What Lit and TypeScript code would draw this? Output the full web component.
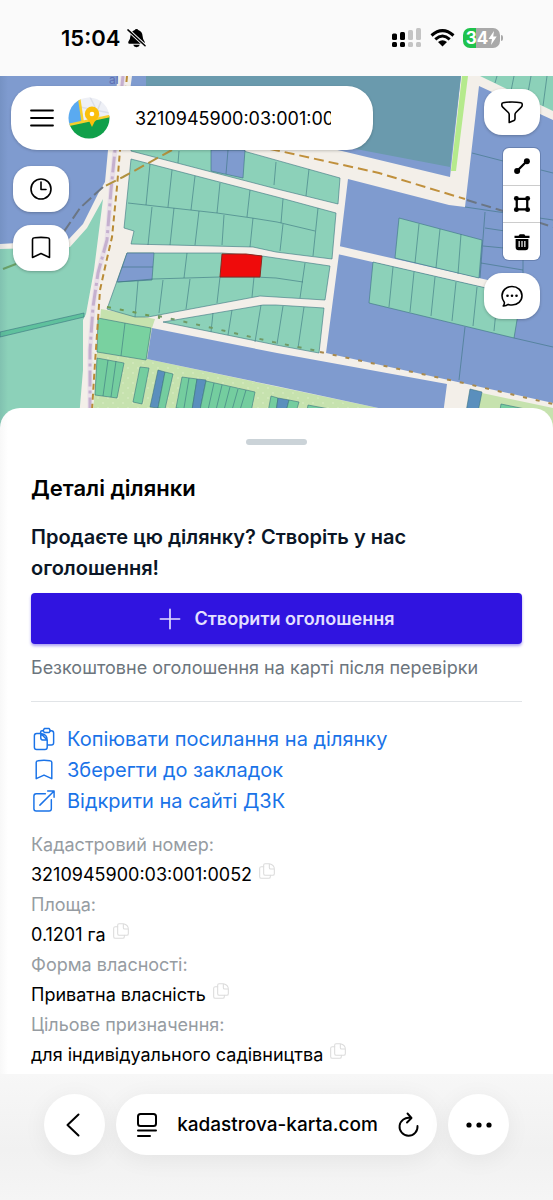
import { LitElement, html, svg, css } from "lit";
import { customElement, property } from "lit/decorators.js";

const GREEN = "#8cd1b9";
const BLUE = "#7f9bcf";

interface Shape {
  points: string;
  fill: string;
}

const areas: Shape[] = [
  { points: "0,76 118,76 108,150 105,182 99,192 83,224 68,240 0,244", fill: BLUE },
  { points: "0,249 70,247 87,228 103,199 94,270 86,314 83,320 83,370 78,430 0,430", fill: GREEN },
  { points: "132,76 461,76 450,177 342,151 128,105", fill: BLUE },
  { points: "146,76 461,76 450,167 340,146 146,105", fill: "#6a9aad" },
  { points: "462,76 468,76 456,171 451,171", fill: "#b5ea8c" },
  { points: "480,76 553,76 553,111", fill: GREEN },
  { points: "348,179 449,205 465,207 479,86 553,120 553,403 326,353 339,254", fill: BLUE },
  { points: "101,309 155,319 152,328 147,359 383,409 443,422 443,430 92,430 97,352", fill: "#c6e2ae" },
  { points: "482,393 553,408 553,430 466,430", fill: "#c6e2ae" },
  { points: "152,328 277,353 447,384 442,422 383,409 276,386 147,359", fill: BLUE },
];

const parcels: Shape[] = [
  { points: "0,332 84,313 84,317 0,337", fill: "#5fc19d" },
  { points: "131,145 215,143 340,178 338,204 277,189 131,151", fill: GREEN },
  { points: "211,150 245,150 243,178 211,171", fill: BLUE },
  { points: "131,159 277,197 336,213 332,259 276,252 253,247 131,244 134,231 124,228", fill: GREEN },
  { points: "127,253 222,253 262,256 330,266 325,300 276,297 260,296 148,317 135,317 107,309", fill: GREEN },
  { points: "127,253 154,253 152,280 117,282", fill: BLUE },
  { points: "163,322 263,305 276,305 324,308 319,353 276,345", fill: GREEN },
  { points: "399,218 482,240 479,278 395,258", fill: GREEN },
  { points: "373,262 521,296 514,338 369,303", fill: GREEN },
  { points: "98,318 151,328 146,360 97,352", fill: "#79d1a0" },
  { points: "97,358 124,363 117,398 95,395", fill: "#74cd9f" },
  { points: "140,367 149,368 142,404 133,402", fill: "#74cd9f" },
  { points: "158,370 165,372 158,408 150,407", fill: "#5a8fbd" },
  { points: "165,372 173,374 165,409 158,408", fill: "#74cd9f" },
  { points: "182,377 197,379 192,410 176,408", fill: "#74cd9f" },
  { points: "197,379 206,380 200,410 192,410", fill: "#5a8fbd" },
  { points: "206,381 255,392 251,412 200,410", fill: "#74cd9f" },
  { points: "271,396 278,398 276,412 268,412", fill: "#74cd9f" },
  { points: "278,398 289,400 286,412 276,412", fill: "#5a8fbd" },
  { points: "289,400 299,402 296,412 286,412", fill: "#74cd9f" },
  { points: "308,405 340,411 340,416 306,416", fill: "#74cd9f" },
  { points: "470,389 482,392 478,412 466,412", fill: "#5a8fbd" },
  { points: "501,404 530,410 530,416 499,416", fill: "#74cd9f" },
];

const boundaries =
  "M228,150L226,174M179,151L178,163M309,169L306,196M276,162L274,185" +
  "M128,203L217,213L252,218L277,222L315,231" +
  "M150,164L146,205M172,170L168,207M195,176L191,210M220,183L217,213M250,190L247,217M283,199L281,223M318,208L313,256" +
  "M152,207L148,245M174,208L170,245M199,211L195,245M224,215L222,245M253,218L250,247M283,224L280,251" +
  "M122,267H153M118,282L153,279L220,277L255,277L276,278L303,282M187,253L184,278M305,263L300,298" +
  "M138,281L135,317M163,280L159,313M190,279L186,309M220,277L217,303M254,277L252,297" +
  "M213,313L211,332M232,310L228,335M261,305L255,342M283,306L277,344M304,307L298,348" +
  "M419,224L415,263M440,229L436,268M461,234L458,274" +
  "M393,267L389,307M414,272L410,312M435,277L431,316M456,282L452,321M477,287L473,326M498,291L494,331" +
  "M465,327L459,380M514,338L553,347M485,212L480,278M485,228L505,231M483,246L504,248M481,263L523,270M523,260V273" +
  "M472,153L503,161M541,170L553,173M465,207L553,220" +
  "M497,76L495,83M514,76L511,91M531,76L527,98M547,76L543,106" +
  "M125,323L121,356M108,360L103,396M116,361L111,397" +
  "M189,378L184,408M214,383L208,410M222,385L216,410M230,387L224,410M238,389L232,410M246,390L240,410";

@customElement("parcel-map")
class ParcelMap extends LitElement {
  static styles = css`
    :host {
      display: block;
    }
    svg {
      display: block;
      width: 100%;
      height: 100%;
    }
    .parcel,
    .boundary {
      stroke: #3a7480;
      stroke-width: 0.6;
    }
    .line {
      fill: none;
    }
    .street {
      fill: #5f6fb4;
      font-size: 12px;
    }
  `;

  render() {
    return html`
      <svg viewBox="0 76 553 354" preserveAspectRatio="xMidYMin slice" role="img" aria-label="Кадастрова карта">
        <defs>
          <pattern id="orchard" width="10" height="10" patternUnits="userSpaceOnUse">
            <circle cx="3" cy="3" r="0.8" fill="#dcedc9"></circle>
            <circle cx="8" cy="8" r="0.8" fill="#dcedc9"></circle>
          </pattern>
          <linearGradient id="edge">
            <stop offset="0" stop-color="#305070" stop-opacity="0.12"></stop>
            <stop offset="1" stop-color="#305070" stop-opacity="0"></stop>
          </linearGradient>
        </defs>
        <rect y="76" width="553" height="354" fill="#f3efe9"></rect>
        ${areas.map((a) => svg`<polygon points=${a.points} fill=${a.fill}></polygon>`)}
        <polygon points="92,352 147,361 383,411 443,424 92,430" fill="url(#orchard)"></polygon>
        <path class="line" d="M338,250L500,287" stroke="#f3efe9" stroke-width="8"></path>
        ${parcels.map((p) => svg`<polygon class="parcel" points=${p.points} fill=${p.fill}></polygon>`)}
        <path class="line boundary" d=${boundaries}></path>
        <polygon points="222,254 246,254 262,256 260,277 220,277" fill="#ef0b0b" stroke="#8a2a20"></polygon>
        <text class="street" x="109" y="84">al</text>
        <path class="line" d="M123,76L115,150L111,190L107,240L98,273L93,307L90,350L90,410" stroke="#e9dfe8" stroke-width="5"></path>
        <path class="line" d="M123,76L115,150L111,190L107,240L98,273L93,307L90,350L90,410" stroke="#c5b0cf" stroke-width="3" stroke-dasharray="16 4 3 4"></path>
        <path class="line" d="M127,76L120,150L117,187L112,237L106,263L100,290L98,320L95,363L92,410" stroke="#b98b35" stroke-width="2" stroke-dasharray="6 4"></path>
        <path class="line" d="M172,150L123,177L103,187" stroke="#b0913f" stroke-width="2" stroke-dasharray="11 5"></path>
        <path class="line" d="M103,187L80,208L63,233" stroke="#6b7684" stroke-width="2" stroke-dasharray="12 4"></path>
        <path class="line" d="M3,269L16,264" stroke="#6aa066" stroke-width="2"></path>
        <path class="line" d="M270,149L284,152L379,173L465,199" stroke="#c0903c" stroke-width="2" stroke-dasharray="10 5"></path>
        <path class="line" d="M467,200L503,211L553,227" stroke="#6b7684" stroke-width="2" stroke-dasharray="10 5"></path>
        <path class="line" d="M107,307L133,312L160,318" stroke="#6f9a55" stroke-width="2" stroke-dasharray="4 9"></path>
        <path class="line" d="M158,316L172,319L208,327L273,342L318,351" stroke="#6f9a66" stroke-width="2" stroke-dasharray="4 9"></path>
        <path class="line" d="M320,352L459,382L553,404" stroke="#a98a4c" stroke-width="2" stroke-dasharray="4 9"></path>
        <rect y="76" width="8" height="354" fill="url(#edge)"></rect>
      </svg>
    `;
  }
}

const stroke24 = (d: string) => svg`<path d=${d} fill="none" stroke="currentColor" stroke-width="1.6" stroke-linecap="round" stroke-linejoin="round"></path>`;

const glyphs: Record<string, unknown> = {
  menu: svg`<path d="M1,4.500H23M1,12H23M1,19.500H23" stroke="currentColor" stroke-width="1.800" stroke-linecap="round"></path>`,
  clock: svg`${stroke24("M22,12A10,10 0 1 1 2,12A10,10 0 0 1 22,12Z")}${stroke24("M12,5V12.500H17")}`,
  bookmark: stroke24("M3.500,3.500Q3.500,2 5.500,1.800Q12,1 18.500,1.800Q20.500,2 20.500,3.500V21.500L12,17.500L3.500,21.500Z"),
  filter: stroke24("M12,2C15.500,2 18.500,2.300 21,2.800Q22.200,3 22.200,4.200V5Q22.200,6.200 21.300,7.100L15.900,12.500Q15,13.400 15,14.600V18.800Q15,20 14,20.600L9.200,22.500V14.600Q9.200,13.400 8.300,12.500L2.700,7.100Q1.800,6.200 1.800,5V4.200Q1.800,3 3,2.800C5.500,2.300 8.500,2 12,2Z"),
  chat: svg`${stroke24("M12,2.500C17.600,2.500 22,6.600 22,11.800S17.600,21 12,21Q10,21 8.200,20.400Q6,22.200 3.200,22Q4.700,20.200 4.300,18.200Q2,15.500 2,11.800C2,6.600 6.400,2.500 12,2.500Z")}
    <circle cx="7.500" cy="11.800" r="1.300"></circle><circle cx="12" cy="11.800" r="1.300"></circle><circle cx="16.500" cy="11.800" r="1.300"></circle>`,
  line: svg`<path d="M6,18L18,6" stroke="currentColor" stroke-width="3"></path><circle cx="5.500" cy="18.500" r="4"></circle><circle cx="18.500" cy="5.500" r="4"></circle>`,
  polygon: svg`<path d="M5,5H19V19H5Z" fill="none" stroke="currentColor" stroke-width="3"></path>
    <circle cx="4.500" cy="4.500" r="3.300"></circle><circle cx="19.500" cy="4.500" r="3.300"></circle><circle cx="4.500" cy="19.500" r="3.300"></circle><circle cx="19.500" cy="19.500" r="3.300"></circle>`,
  trash: svg`<path fill-rule="evenodd" d="M9,1.500H15L16.500,3.500H22V6.500H2V3.500H7.500ZM3.500,8H20.500V19Q20.500,23 16.500,23H7.500Q3.500,23 3.500,19ZM7.400,10.500V18.500H9V10.500ZM11.200,10.500V18.500H12.800V10.500ZM15,10.500V18.500H16.600V10.500Z"></path>`,
  plus: svg`<path d="M12,1.500V22.500M1.500,12H22.500" stroke="currentColor" stroke-width="1.800" stroke-linecap="round"></path>`,
  clipboard: svg`${stroke24("M8.300,6V4.500Q8.300,3 9.800,3H11M18.500,3H20Q22.500,3 22.500,5.500V16Q22.500,18.500 20,18.500H16")}
    ${stroke24("M12.500,0.500H17.500L19,3L17.500,5H12.500L11,3Z")}
    ${stroke24("M8.500,6H4Q1.500,6 1.500,8.500V21Q1.500,23.500 4,23.500H13Q15.500,23.500 15.500,21V13ZM8.500,6V11Q8.500,13 10.500,13H15.500M8.500,6Q15.500,7 15.500,13")}`,
  external: svg`${stroke24("M13.500,4H3.500Q1,4 1,6.500V20.500Q1,23 3.500,23H17.500Q20,23 20,20.500V10.500")}${stroke24("M7.500,16.500L23,1M16,1H23V8")}`,
  copy: svg`${stroke24("M9,1H15.500Q23,2.500 23,9V16Q23,18.500 20.500,18.500H9.500Q7,18.500 7,16V3.500Q7,1 9,1ZM15.500,1V7Q15.500,9 17.500,9H23")}
    ${stroke24("M7,5.500H3.500Q1,5.500 1,8V20.500Q1,23 3.500,23H14.500Q17,23 17,20.500V18.500")}`,
  back: svg`<path d="M15.500,1.500L4.500,12L15.500,22.500" fill="none" stroke="currentColor" stroke-width="2" stroke-linecap="round" stroke-linejoin="round"></path>`,
  page: svg`<rect x="3" y="1" width="18" height="12" rx="2.500" fill="none" stroke="currentColor" stroke-width="2"></rect><path d="M3,17.500H21M3,23H15" stroke="currentColor" stroke-width="2" stroke-linecap="round"></path>`,
  reload: svg`<path d="M14.500,5A9,9 0 1 0 21.500,13M11.500,0.500L15.500,5L11,9.500" fill="none" stroke="currentColor" stroke-width="1.900" stroke-linecap="round" stroke-linejoin="round"></path>`,
};

@customElement("line-icon")
class LineIcon extends LitElement {
  @property() name = "";

  static styles = css`
    :host {
      display: inline-block;
      flex: none;
      width: 24px;
      height: 24px;
    }
    svg {
      display: block;
      width: 100%;
      height: 100%;
      fill: currentColor;
      overflow: visible;
    }
  `;

  render() {
    return html`<svg viewBox="0 0 24 24" aria-hidden="true">${glyphs[this.name]}</svg>`;
  }
}

@customElement("phone-status")
class PhoneStatus extends LitElement {
  static styles = css`
    :host {
      display: flex;
      align-items: center;
      justify-content: space-between;
      height: 76px;
      padding: 0 50px 0 61px;
      box-sizing: border-box;
      background: #fafafa;
      color: #000;
    }
    .group {
      display: flex;
      align-items: center;
    }
    .time {
      font-size: 22px;
      font-weight: 600;
    }
    .bell {
      margin-left: 7px;
    }
    .wifi {
      margin: 0 8px 0 9px;
    }
    .battery {
      display: flex;
      align-items: center;
      justify-content: center;
      width: 37px;
      height: 20px;
      border-radius: 7px;
      background: linear-gradient(90deg, #1fc24d 34%, #a9a9a9 34%);
      color: #fff;
      font-size: 17px;
      font-weight: 700;
    }
    .cap {
      width: 2px;
      height: 6px;
      margin-left: 1px;
      border-radius: 0 2px 2px 0;
      background: #a9a9a9;
    }
  `;

  render() {
    return html`
      <div class="group">
        <span class="time">15:04</span>
        <svg class="bell" width="19" height="20" viewBox="0 0 20 20" aria-hidden="true">
          <path d="M10,0.500Q11.500,0.500 11.800,1.500Q16.200,3 16.400,8Q16.600,12 18.600,14Q19.300,16 17.500,16H2.500Q0.700,16 1.400,14Q3.400,12 3.600,8Q3.800,3 8.200,1.500Q8.500,0.500 10,0.500ZM6.500,17.200H13.500Q12.800,19.800 10,19.800T6.500,17.200Z"></path>
          <path d="M0,0.500L20,19" stroke="#fafafa" stroke-width="3.600"></path>
          <path d="M1,1.500L19,18.200" stroke="#000" stroke-width="1.600" stroke-linecap="round"></path>
        </svg>
      </div>
      <div class="group">
        <svg width="29" height="20" viewBox="0 0 29 20" aria-hidden="true">
          <rect x="0" y="5.500" width="5" height="6.500" rx="1.500"></rect>
          <rect x="8" y="4" width="5" height="8" rx="1.500"></rect>
          <rect x="16" y="2" width="5" height="10" rx="1.500" fill="#c4c4c4"></rect>
          <rect x="24" y="0" width="5" height="12" rx="1.500" fill="#c4c4c4"></rect>
          <rect x="0" y="14" width="5" height="5" rx="1.500"></rect>
          <rect x="8" y="14" width="5" height="5" rx="1.500"></rect>
          <rect x="16" y="14" width="5" height="5" rx="1.500" fill="#c4c4c4"></rect>
          <rect x="24" y="14" width="5" height="5" rx="1.500" fill="#c4c4c4"></rect>
        </svg>
        <svg class="wifi" width="25" height="18" viewBox="0 0 25 18" aria-hidden="true">
          <path d="M1.500,6.500Q12.500,-3.200 23.500,6.500M5.300,10.300Q12.500,3.800 19.700,10.300" fill="none" stroke="#000" stroke-width="3"></path>
          <path d="M8,13Q12.500,9.500 17,13L12.500,17.600Z"></path>
        </svg>
        <span class="battery">34<svg width="9" height="14" viewBox="0 0 9 14" fill="#fff" aria-hidden="true"><path d="M6,0L0.500,8H4L3,14L8.700,5.500H5.200Z"></path></svg></span>
        <span class="cap"></span>
      </div>
    `;
  }
}

interface Detail {
  label: string;
  value: string;
}

@customElement("app-root")
class AppRoot extends LitElement {
  @property({ attribute: false }) details: Detail[] = [
    { label: "Кадастровий номер:", value: "3210945900:03:001:0052" },
    { label: "Площа:", value: "0.1201 га" },
    { label: "Форма власності:", value: "Приватна власність" },
    { label: "Цільове призначення:", value: "для індивідуального садівництва" },
  ];

  static styles = css`
    :host {
      display: flex;
      flex-direction: column;
      min-height: 100vh;
      background: #fff;
      color: #000;
      font-family: Inter, "Noto Sans", sans-serif;
    }
    button,
    input {
      padding: 0;
      border: 0;
      background: none;
      color: inherit;
      font: inherit;
    }
    button {
      cursor: pointer;
    }
    .stage {
      position: relative;
      display: flex;
      justify-content: space-between;
      gap: 24px;
      height: 354px;
      box-sizing: border-box;
      padding: 10px 13px 0 11px;
    }
    .map {
      position: absolute;
      inset: 0;
    }
    .side {
      position: relative;
      display: flex;
      flex-direction: column;
      gap: 13px;
    }
    .left {
      flex: 1;
      max-width: 362px;
    }
    .right {
      align-items: flex-end;
      padding-top: 3px;
    }
    .search {
      display: flex;
      align-items: center;
      height: 64px;
      box-sizing: border-box;
      margin-bottom: 3px;
      padding: 0 42px 0 19px;
      border-radius: 26px;
      background: #fff;
      box-shadow: 0 1px 3px rgba(0, 0, 0, 0.2);
    }
    .burger {
      display: flex;
      margin-right: 14px;
    }
    .logo {
      flex: none;
      width: 42px;
      height: 42px;
      margin-right: 25px;
    }
    .query {
      flex: 1;
      min-width: 0;
      font-size: 18px;
      outline: none;
    }
    .chip {
      display: flex;
      align-items: center;
      justify-content: center;
      width: 56px;
      height: 46px;
      border-radius: 18px;
      background: #fff;
      box-shadow: 0 1px 3px rgba(0, 0, 0, 0.25);
    }
    .left .chip {
      margin-left: 2px;
    }
    .tools {
      display: flex;
      flex-direction: column;
      width: 37px;
      height: 112px;
      border-radius: 6px;
      background: #fff;
      box-shadow: 0 0 0 1px rgba(60, 80, 120, 0.35);
    }
    .tool {
      flex: 1;
      display: flex;
      align-items: center;
      justify-content: center;
    }
    .tool + .tool {
      border-top: 1px solid #ccc;
    }
    .tool line-icon {
      width: 18px;
      height: 18px;
    }
    .sheet {
      position: relative;
      flex: 1;
      margin-top: -22px;
      padding: 31px 31px 4px;
      border-radius: 20px 20px 0 0;
      background: linear-gradient(90deg, #f8f8f8, #fff 8px);
    }
    .handle {
      display: block;
      width: 61px;
      height: 6px;
      margin: 0 auto 28px;
      border-radius: 3px;
      background: #cbd3d8;
    }
    h1,
    h2,
    p,
    dl,
    dd {
      margin: 0;
    }
    h1 {
      font-size: 22px;
      font-weight: 600;
      line-height: 30px;
      margin-bottom: 19px;
    }
    h2 {
      color: #0b1626;
      font-size: 20px;
      font-weight: 600;
      line-height: 31px;
      margin-bottom: 9px;
    }
    .create {
      display: flex;
      align-items: center;
      justify-content: center;
      gap: 14px;
      width: 100%;
      height: 51px;
      border-radius: 4px;
      background: #3014e0;
      box-shadow: 0 2px 3px rgba(48, 20, 224, 0.4);
      color: #e4e0ff;
      font-size: 18px;
      font-weight: 600;
    }
    .note {
      margin-top: 9px;
      padding-bottom: 18px;
      border-bottom: 1px solid #e1e4e7;
      color: #6c757d;
      font-size: 18px;
      line-height: 30px;
    }
    .actions {
      display: flex;
      flex-direction: column;
      align-items: flex-start;
      margin: 21px 0 14px;
      padding-left: 2px;
    }
    .action {
      display: flex;
      align-items: center;
      gap: 12px;
      height: 31px;
      color: #1a73e8;
      font-size: 20px;
      text-decoration: none;
    }
    .create line-icon,
    .action line-icon {
      width: 22px;
      height: 22px;
    }
    .details {
      font-size: 18px;
      line-height: 30px;
    }
    dt {
      color: #969ca2;
    }
    dd {
      display: flex;
      gap: 7px;
    }
    .copy {
      display: flex;
      height: 22px;
      align-items: center;
      color: #dcdcdc;
    }
    .copy line-icon {
      width: 16px;
      height: 18px;
    }
    .browser {
      display: flex;
      gap: 11px;
      padding: 20px 44px 45px;
      background: linear-gradient(#f7f7f7, #f1f1f1 60%, #f5f5f5);
    }
    .round,
    .address {
      display: flex;
      align-items: center;
      height: 61px;
      border-radius: 31px;
      background: #fff;
      box-shadow: 0 4px 24px rgba(0, 0, 0, 0.06);
    }
    .round {
      flex: none;
      justify-content: center;
      width: 61px;
    }
    .address {
      flex: 1;
      justify-content: space-between;
      box-sizing: border-box;
      padding: 0 17px 0 19px;
      font-size: 19px;
      font-weight: 500;
    }
    .icon-button {
      display: flex;
    }
  `;

  render() {
    return html`
      <phone-status></phone-status>
      <section class="stage">
        <parcel-map class="map"></parcel-map>
        <div class="side left">
          <div class="search">
            <button class="burger" aria-label="Меню"><line-icon name="menu"></line-icon></button>
            <svg class="logo" viewBox="0 0 42 42" aria-hidden="true">
              <defs><clipPath id="disc"><circle cx="21" cy="21" r="20.500"></circle></clipPath></defs>
              <g clip-path="url(#disc)">
                <rect width="42" height="42" fill="#eef0f6"></rect>
                <path d="M22,0L32,20M34,2L26,22M12,10L42,16" stroke="#dcdfe9" stroke-width="1.500"></path>
                <path d="M0,0H11L15,26L0,30Z" fill="#5aaaf0"></path>
                <path d="M11,0L15,27" stroke="#f6cf2d" stroke-width="2.500"></path>
                <path d="M0,28L42,19V42H0Z" fill="#10a04a"></path>
                <path d="M0,28L42,19" stroke="#f6cf2d" stroke-width="2.500"></path>
              </g>
              <path d="M24,30Q22,24.500 19,22A7.200,7.200 0 1 1 29,22Q26,24.500 24,30Z" fill="#fbbf0c"></path>
              <circle cx="24" cy="17" r="2.300" fill="#fff"></circle>
            </svg>
            <input class="query" type="text" aria-label="Пошук ділянки" .value=${"3210945900:03:001:0052"} />
          </div>
          <button class="chip" aria-label="Історія"><line-icon name="clock"></line-icon></button>
          <button class="chip" aria-label="Закладки"><line-icon name="bookmark"></line-icon></button>
        </div>
        <div class="side right">
          <button class="chip" aria-label="Фільтр"><line-icon name="filter"></line-icon></button>
          <div class="tools">
            <button class="tool" aria-label="Виміряти відстань"><line-icon name="line"></line-icon></button>
            <button class="tool" aria-label="Виміряти площу"><line-icon name="polygon"></line-icon></button>
            <button class="tool" aria-label="Видалити"><line-icon name="trash"></line-icon></button>
          </div>
          <button class="chip" aria-label="Чат"><line-icon name="chat"></line-icon></button>
        </div>
      </section>
      <main class="sheet">
        <span class="handle"></span>
        <h1>Деталі ділянки</h1>
        <h2>Продаєте цю ділянку? Створіть у нас оголошення!</h2>
        <button class="create"><line-icon name="plus"></line-icon>Створити оголошення</button>
        <p class="note">Безкоштовне оголошення на карті після перевірки</p>
        <div class="actions">
          <button class="action"><line-icon name="clipboard"></line-icon>Копіювати посилання на ділянку</button>
          <button class="action"><line-icon name="bookmark"></line-icon>Зберегти до закладок</button>
          <a class="action" href="#dzk"><line-icon name="external"></line-icon>Відкрити на сайті ДЗК</a>
        </div>
        <dl class="details">
          ${this.details.map(
            (d) => html`
              <dt>${d.label}</dt>
              <dd>${d.value}<button class="copy" aria-label="Копіювати"><line-icon name="copy"></line-icon></button></dd>
            `,
          )}
        </dl>
      </main>
      <nav class="browser">
        <button class="round" aria-label="Назад"><line-icon name="back"></line-icon></button>
        <div class="address">
          <button class="icon-button" aria-label="Меню сторінки"><line-icon name="page"></line-icon></button>
          <span>kadastrova-karta.com</span>
          <button class="icon-button" aria-label="Оновити"><line-icon name="reload"></line-icon></button>
        </div>
        <button class="round" aria-label="Більше">
          <svg width="26" height="6" viewBox="0 0 26 6" aria-hidden="true"><circle cx="3" cy="3" r="2.600"></circle><circle cx="13" cy="3" r="2.600"></circle><circle cx="23" cy="3" r="2.600"></circle></svg>
        </button>
      </nav>
    `;
  }
}
